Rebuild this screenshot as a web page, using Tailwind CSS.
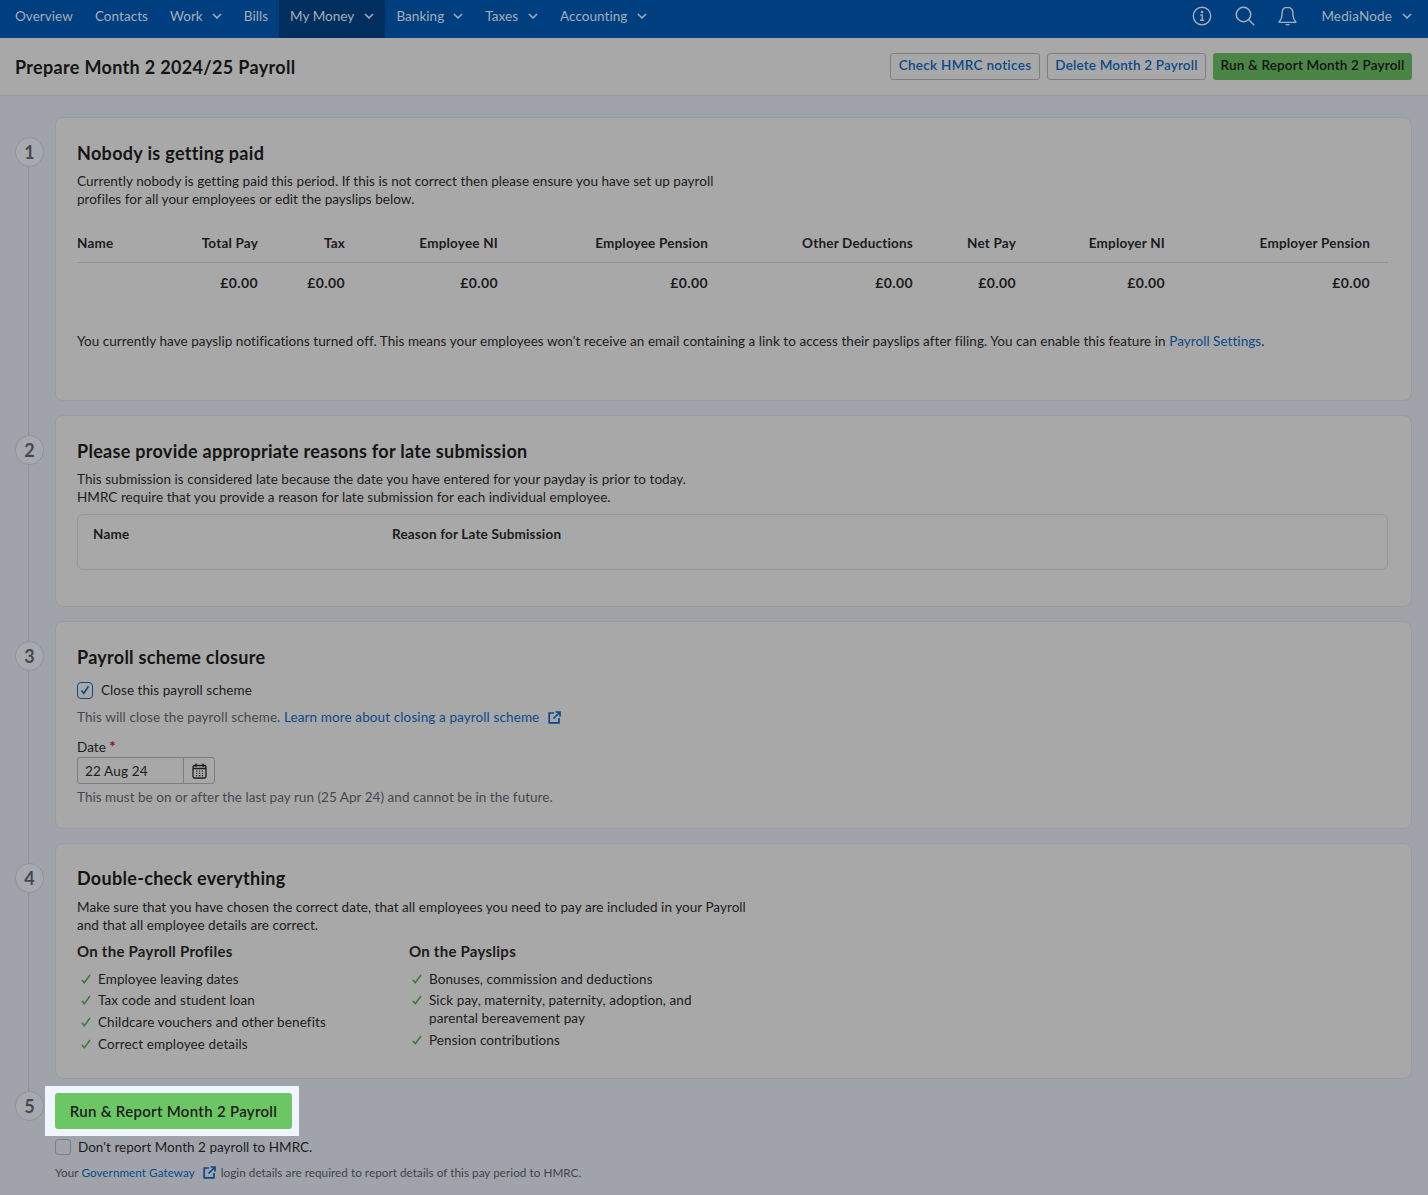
<!DOCTYPE html>
<html lang="en">
<head>
<meta charset="utf-8">
<title>Prepare Payroll</title>
<script src="https://cdn.jsdelivr.net/npm/@tailwindcss/browser@4"></script>
</head>
<body class="m-0 bg-[#a0a4aa] font-['Lato','Liberation_Sans',sans-serif] text-[13.5px] leading-[18px] text-[#1c1c1c] tracking-[0.05px] w-[1428px] h-[1195px] overflow-hidden">

<nav class="h-[38px] bg-[#003f7f] flex items-stretch justify-between text-[#a7aeb6] text-[13.5px] pl-[4px] pr-[16px]">
  <div class="flex items-stretch">
    <a class="flex items-center px-[11px] pb-[7px]">Overview</a>
    <a class="flex items-center px-[11px] pb-[7px]">Contacts</a>
    <a class="flex items-center gap-[9px] px-[11px] pb-[7px]">Work <svg class="mt-[1px]" width="10" height="6" viewBox="0 0 10 6" fill="none" stroke="currentColor" stroke-width="1.5"><path d="M1 1l4 4 4-4"/></svg></a>
    <a class="flex items-center px-[11px] pb-[7px]">Bills</a>
    <a class="flex items-center gap-[10px] px-[11px] pb-[7px] bg-[#002f5f]">My Money <svg class="mt-[1px]" width="10" height="6" viewBox="0 0 10 6" fill="none" stroke="currentColor" stroke-width="1.5"><path d="M1 1l4 4 4-4"/></svg></a>
    <a class="flex items-center gap-[9px] px-[11px] pb-[7px]">Banking <svg class="mt-[1px]" width="10" height="6" viewBox="0 0 10 6" fill="none" stroke="currentColor" stroke-width="1.5"><path d="M1 1l4 4 4-4"/></svg></a>
    <a class="flex items-center gap-[10px] px-[11px] pb-[7px]">Taxes <svg class="mt-[1px]" width="10" height="6" viewBox="0 0 10 6" fill="none" stroke="currentColor" stroke-width="1.5"><path d="M1 1l4 4 4-4"/></svg></a>
    <a class="flex items-center gap-[10px] px-[11px] pb-[7px]">Accounting <svg class="mt-[1px]" width="10" height="6" viewBox="0 0 10 6" fill="none" stroke="currentColor" stroke-width="1.5"><path d="M1 1l4 4 4-4"/></svg></a>
  </div>
  <div class="flex items-center pb-[7px]">
    <svg class="mr-[23px] -ml-[1px]" width="20" height="20" viewBox="0 0 20 20" fill="none" stroke="currentColor" stroke-width="1.4"><circle cx="10" cy="10" r="8.7"/><path d="M8.300 9h1.900v5M8 14.200h4.200"/><circle cx="10" cy="6" r=".6" fill="currentColor"/></svg>
    <svg class="mr-[23px]" width="20" height="20" viewBox="0 0 20 20" fill="none" stroke="currentColor" stroke-width="1.5"><circle cx="8.500" cy="8.500" r="7.200"/><path d="M13.800 13.800l5.400 5.400"/></svg>
    <svg class="mr-[24px]" width="19" height="20" viewBox="0 0 19 20" fill="none" stroke="currentColor" stroke-width="1.4"><path d="M9.500 1.200c-3.600 0-5.400 2.700-5.400 6 0 4.400-1 6.600-2.800 8.400v.8h16.400v-.8c-1.800-1.800-2.800-4-2.800-8.400 0-3.300-1.800-6-5.400-6zM7.500 18.600h4"/></svg>
    <span class="mr-[10px] tracking-[0.15px]">MediaNode</span>
    <svg class="mt-[1px]" width="10" height="6" viewBox="0 0 10 6" fill="none" stroke="currentColor" stroke-width="1.5"><path d="M1 1l4 4 4-4"/></svg>
  </div>
</nav>

<header class="h-[58px] bg-[#a8a8a8] border-b border-[#93979c] flex items-center justify-between pl-[15px] pr-[16px]">
  <h1 class="text-[18px] font-bold leading-[24px] tracking-[0.33px] text-[#151515]">Prepare Month 2 2024/25 Payroll</h1>
  <div class="flex gap-[7px] text-[13.5px] font-semibold tracking-[0.17px]">
    <a class="h-[27px] w-[150px] flex items-center justify-center pb-[3px] border border-[#7b7f83] rounded-[3px] text-[#0a4a8a] tracking-[0.3px]">Check HMRC notices</a>
    <a class="h-[27px] w-[159px] flex items-center justify-center pb-[3px] border border-[#7b7f83] rounded-[3px] text-[#0a4a8a]">Delete Month 2 Payroll</a>
    <a class="h-[27px] w-[199px] flex items-center justify-center pb-[3px] rounded-[3px] bg-[#4a8546] text-[#111]">Run &amp; Report Month 2 Payroll</a>
  </div>
</header>

<main class="relative pl-[15px] pr-[16px] pt-[21px]">
  <div class="absolute left-[28px] top-[50px] h-[946px] w-px bg-[#8d9197]"></div>

  <section class="flex h-[284px] gap-[11px]">
    <div class="relative mt-[20px] w-[29px] h-[30px] shrink-0 rounded-full bg-[#a6a9ae] border border-[#8f9398] flex items-center justify-center text-[18px] font-bold text-[#45494e]">1</div>
    <div class="flex-1 bg-[#a8a8a8] rounded-[8px] border border-[#9a9c9f] pt-[23px] pl-[21px] pr-[23px]">
      <h2 class="text-[18px] leading-[24px] font-bold tracking-[0.33px] text-[#151515]">Nobody is getting paid</h2>
      <p class="mt-[7px] w-[660px]">Currently nobody is getting paid this period. If this is not correct then please ensure you have set up payroll profiles for all your employees or edit the payslips below.</p>
      <div class="mt-[16px] border-b border-[#8f9296] h-[39px] pb-[1px] flex items-center font-bold tracking-[0.2px] text-[#1c1c1c]">
        <span class="w-[101px]">Name</span><span class="w-[80px] text-right">Total Pay</span><span class="w-[87px] text-right">Tax</span><span class="w-[153px] text-right">Employee NI</span><span class="w-[210px] text-right">Employee Pension</span><span class="w-[205px] text-right">Other Deductions</span><span class="w-[103px] text-right">Net Pay</span><span class="w-[149px] text-right">Employer NI</span><span class="w-[205px] text-right">Employer Pension</span>
      </div>
      <div class="h-[40px] flex items-center font-bold text-[14px] tracking-[0.4px] text-[#1c1c1c]">
        <span class="w-[101px]"></span><span class="w-[80px] text-right">£0.00</span><span class="w-[87px] text-right">£0.00</span><span class="w-[153px] text-right">£0.00</span><span class="w-[210px] text-right">£0.00</span><span class="w-[205px] text-right">£0.00</span><span class="w-[103px] text-right">£0.00</span><span class="w-[149px] text-right">£0.00</span><span class="w-[205px] text-right">£0.00</span>
      </div>
      <p class="mt-[29px]">You currently have payslip notifications turned off. This means your employees won't receive an email containing a link to access their payslips after filing. You can enable this feature in <a class="text-[#0a4a8a]">Payroll Settings</a>.</p>
    </div>
  </section>

  <section class="flex h-[192px] gap-[11px] mt-[14px]">
    <div class="relative mt-[20px] w-[29px] h-[30px] shrink-0 rounded-full bg-[#a6a9ae] border border-[#8f9398] flex items-center justify-center text-[18px] font-bold text-[#45494e]">2</div>
    <div class="flex-1 bg-[#a8a8a8] rounded-[8px] border border-[#9a9c9f] pt-[23px] pl-[21px] pr-[23px]">
      <h2 class="text-[18px] leading-[24px] font-bold tracking-[0.29px] text-[#151515]">Please provide appropriate reasons for late submission</h2>
      <p class="mt-[7px]">This submission is considered late because the date you have entered for your payday is prior to today.<br>HMRC require that you provide a reason for late submission for each individual employee.</p>
      <div class="mt-[8px] h-[56px] border border-[#94979b] rounded-[6px] pl-[15px] pt-[10px] flex font-bold tracking-[0.18px]">
        <span class="w-[299px]">Name</span><span>Reason for Late Submission</span>
      </div>
    </div>
  </section>

  <section class="flex h-[208px] gap-[11px] mt-[14px]">
    <div class="relative mt-[20px] w-[29px] h-[30px] shrink-0 rounded-full bg-[#a6a9ae] border border-[#8f9398] flex items-center justify-center text-[18px] font-bold text-[#45494e]">3</div>
    <div class="flex-1 bg-[#a8a8a8] rounded-[8px] border border-[#9a9c9f] pt-[23px] pl-[21px] pr-[22px]">
      <h2 class="text-[18px] leading-[24px] font-bold tracking-[0.27px] text-[#151515]">Payroll scheme closure</h2>
      <label class="mt-[12px] flex items-center gap-[8px]">
        <span class="w-[16px] h-[17px] rounded-[4px] border border-[#0a4a8a] flex items-center justify-center"><svg width="10" height="10" viewBox="0 0 10 10" fill="none" stroke="#0a4a8a" stroke-width="1.6"><path d="M1.500 5.500l2.300 2.800L8.500 1.200"/></svg></span>
        Close this payroll scheme
      </label>
      <p class="mt-[9px] flex items-center text-[#45484c] tracking-[0.11px]">This will close the payroll scheme.&nbsp;<a class="text-[#0a4a8a]">Learn more about closing a payroll scheme</a>
        <svg class="ml-[9px]" width="13" height="13" viewBox="0 0 13 13" fill="none" stroke="#0a4a8a" stroke-width="1.700"><path d="M6 2H1.200v9.800H11V7M7.500 1h4.500v4.500M12 1L5.500 7.500"/></svg>
      </p>
      <p class="mt-[11px] h-[18px]">Date <span class="text-[#8a0f17] font-bold text-[15px] leading-[18px]">*</span></p>
      <div class="flex h-[27px] w-[138px] mt-[2px] border border-[#7b7f83] rounded-[3px]">
        <span class="flex-1 flex items-center pl-[7px] border-r border-[#7b7f83] tracking-[0.15px]">22 Aug 24</span>
        <span class="w-[30px] flex items-center justify-center"><svg width="15" height="16" viewBox="0 0 15 16" fill="none" stroke="#1c1c1c" stroke-width="1.300"><rect x="1" y="2.500" width="13" height="12.500" rx="1.500"/><path d="M4 .5v3.500M11 .5v3.500M1 5.500h13"/><path d="M4 8h1.300M6.900 8h1.300M9.800 8h1.300M4 10.300h1.300M6.900 10.300h1.300M9.800 10.300h1.300M4 12.600h1.300M6.900 12.600h1.300M9.800 12.600h1.300" stroke-width="1.100"/></svg></span>
      </div>
      <p class="mt-[4px] text-[#45484c] tracking-[0.03px]">This must be on or after the last pay run (25 Apr 24) and cannot be in the future.</p>
    </div>
  </section>

  <section class="flex h-[236px] gap-[11px] mt-[14px]">
    <div class="relative mt-[20px] w-[29px] h-[30px] shrink-0 rounded-full bg-[#a6a9ae] border border-[#8f9398] flex items-center justify-center text-[18px] font-bold text-[#45494e]">4</div>
    <div class="flex-1 bg-[#a8a8a8] rounded-[8px] border border-[#9a9c9f] pt-[22px] pl-[21px] pr-[22px]">
      <h2 class="text-[18px] leading-[24px] font-bold tracking-[0.3px] text-[#151515]">Double-check everything</h2>
      <p class="mt-[8px] w-[680px]">Make sure that you have chosen the correct date, that all employees you need to pay are included in your Payroll and that all employee details are correct.</p>
      <div class="mt-[7px] flex">
        <div class="w-[332px]">
          <h3 class="text-[15px] leading-[20px] font-bold tracking-[0.25px]">On the Payroll Profiles</h3>
          <ul class="mt-[9px] flex flex-col gap-[3.500px] tracking-[0.1px]">
            <li class="flex items-center gap-[7px] pl-[4px]"><svg width="10" height="10" viewBox="0 0 10 10" fill="none" stroke="#3c7a38" stroke-width="1.500"><path d="M.8 5.800l2.500 3L9 1"/></svg>Employee leaving dates</li>
            <li class="-mt-px flex items-center gap-[7px] pl-[4px]"><svg width="10" height="10" viewBox="0 0 10 10" fill="none" stroke="#3c7a38" stroke-width="1.500"><path d="M.8 5.800l2.500 3L9 1"/></svg>Tax code and student loan</li>
            <li class="mt-px flex items-center gap-[7px] pl-[4px]"><svg width="10" height="10" viewBox="0 0 10 10" fill="none" stroke="#3c7a38" stroke-width="1.500"><path d="M.8 5.800l2.500 3L9 1"/></svg>Childcare vouchers and other benefits</li>
            <li class="flex items-center gap-[7px] pl-[4px]"><svg width="10" height="10" viewBox="0 0 10 10" fill="none" stroke="#3c7a38" stroke-width="1.500"><path d="M.8 5.800l2.500 3L9 1"/></svg>Correct employee details</li>
          </ul>
        </div>
        <div class="w-[320px]">
          <h3 class="text-[15px] leading-[20px] font-bold tracking-[0.25px]">On the Payslips</h3>
          <ul class="mt-[9px] flex flex-col gap-[3.500px] tracking-[0.1px]">
            <li class="flex items-center gap-[7px] pl-[3px]"><svg width="10" height="10" viewBox="0 0 10 10" fill="none" stroke="#3c7a38" stroke-width="1.500"><path d="M.8 5.800l2.500 3L9 1"/></svg>Bonuses, commission and deductions</li>
            <li class="-mt-px flex items-start gap-[7px] pl-[3px]"><svg class="mt-[4px] shrink-0" width="10" height="10" viewBox="0 0 10 10" fill="none" stroke="#3c7a38" stroke-width="1.500"><path d="M.8 5.800l2.500 3L9 1"/></svg><span>Sick pay, maternity, paternity, adoption, and<br>parental bereavement pay</span></li>
            <li class="mt-px flex items-center gap-[7px] pl-[3px]"><svg width="10" height="10" viewBox="0 0 10 10" fill="none" stroke="#3c7a38" stroke-width="1.500"><path d="M.8 5.800l2.500 3L9 1"/></svg>Pension contributions</li>
          </ul>
        </div>
      </div>
    </div>
  </section>

  <section class="flex gap-[11px] mt-[7px]">
    <div class="relative mt-[5px] w-[29px] h-[30px] shrink-0 rounded-full bg-[#a6a9ae] border border-[#8f9398] flex items-center justify-center text-[18px] font-bold text-[#45494e]">5</div>
    <div>
      <div class="w-fit bg-[#f0f5ff] py-[7px] pl-[10px] pr-[7px] -ml-[10px]">
        <button class="h-[36px] w-[237px] bg-[#6cc664] rounded-[3px] text-[15px] font-semibold text-[#1c1c1c] tracking-[0.3px]">Run &amp; Report Month 2 Payroll</button>
      </div>
      <label class="mt-[1px] flex items-center gap-[7px] leading-[20px] tracking-[0.02px]"><span class="w-[16px] h-[16px] rounded-[3px] border border-[#7b7f83]"></span>Don't report Month 2 payroll to HMRC.</label>
      <p class="mt-[7px] text-[11.7px] leading-[16px] text-[#3f4246] flex items-center">Your&nbsp;<a class="text-[#0a4a8a]">Government Gateway</a>
        <svg class="ml-[8px] mr-[5px]" width="13" height="13" viewBox="0 0 13 13" fill="none" stroke="#0a4a8a" stroke-width="1.700"><path d="M6 2H1.200v9.800H11V7M7.500 1h4.500v4.500M12 1L5.500 7.500"/></svg>
        login details are required to report details of this pay period to HMRC.</p>
    </div>
  </section>
</main>
</body>
</html>
